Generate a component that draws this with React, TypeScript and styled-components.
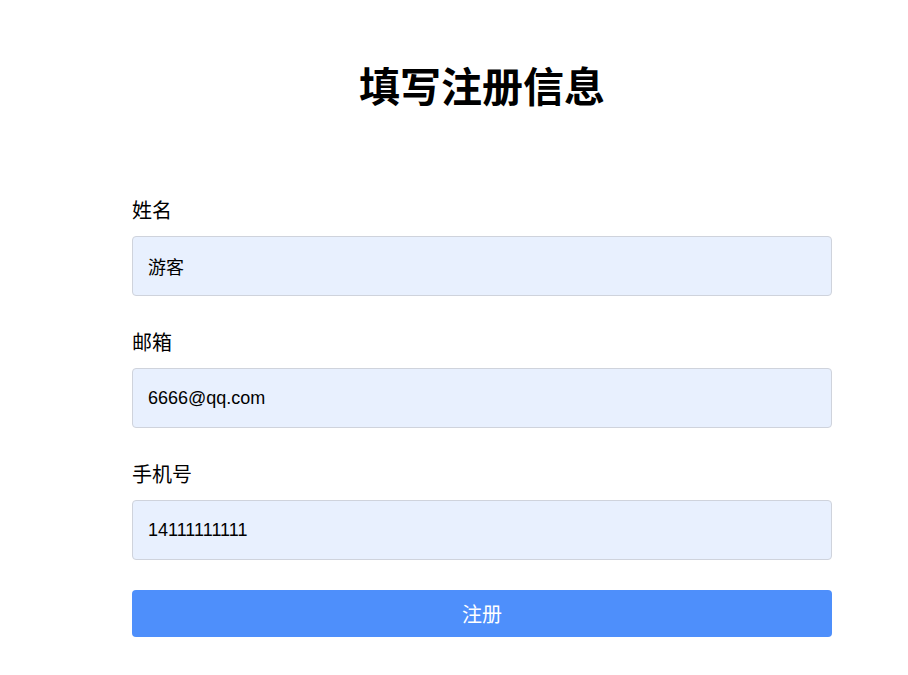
import React, {useState} from 'react';
import styled, {createGlobalStyle} from "styled-components";

const GlobalStyle = createGlobalStyle`
  html, body {
    margin: 0;
    padding: 0;
    background: #fff;
  }
  body {
    font-family: "Liberation Sans", "Noto Sans CJK SC", sans-serif;
    color: #000;
  }
`

type FieldType = {
    label: string
    name: string
    value: string
}

const initialFields: FieldType[] = [
    {label: '姓名', name: 'name', value: '游客'},
    {label: '邮箱', name: 'email', value: '6666@qq.com'},
    {label: '手机号', name: 'phone', value: '14111111111'},
]

export default function App() {
    const [fields, setFields] = useState(initialFields)

    const changeHandler = (name: string, value: string) => {
        setFields(fields.map(f => f.name === name ? {...f, value} : f))
    }

    return (
        <>
            <GlobalStyle/>
            <StyledPage>
                <StyledTitle>填写注册信息</StyledTitle>
                <StyledForm onSubmit={e => e.preventDefault()}>
                    {fields.map(field => (
                        <StyledField key={field.name}>
                            <StyledLabel htmlFor={field.name}>{field.label}</StyledLabel>
                            <StyledInput
                                id={field.name}
                                value={field.value}
                                onChange={e => changeHandler(field.name, e.target.value)}
                            />
                        </StyledField>
                    ))}
                    <StyledButton type="submit">注册</StyledButton>
                </StyledForm>
            </StyledPage>
        </>
    );
}

const StyledPage = styled.div`
  width: 700px;
  margin-left: 132px;
  padding-top: 58px;
`

const StyledTitle = styled.h1`
  margin: 0 0 88px;
  text-align: center;
  font-size: 41px;
  line-height: 52px;
  font-weight: 700;
  font-family: "Noto Sans CJK SC", sans-serif;
`

const StyledForm = styled.form`
  display: flex;
  flex-direction: column;
`

const StyledField = styled.div`
  display: flex;
  flex-direction: column;
  gap: 14px;
  margin-bottom: 34px;

  &:last-of-type {
    margin-bottom: 30px;
  }
`

const StyledLabel = styled.label`
  font-size: 20px;
  line-height: 24px;
  font-family: "Noto Sans CJK SC", sans-serif;
`

const StyledInput = styled.input`
  box-sizing: border-box;
  height: 60px;
  width: 100%;
  padding: 0 15px;
  border: 1px solid #cfd3dc;
  border-radius: 4px;
  background: #e8f0fe;
  font-size: 18px;
  font-family: "Liberation Sans", "Noto Sans CJK SC", sans-serif;
  color: #000;
  outline: none;
`

const StyledButton = styled.button`
  height: 47px;
  width: 100%;
  border: none;
  border-radius: 4px;
  background: #4e8ffb;
  color: #fff;
  font-size: 20px;
  font-family: "Noto Sans CJK SC", sans-serif;
  cursor: pointer;
`
